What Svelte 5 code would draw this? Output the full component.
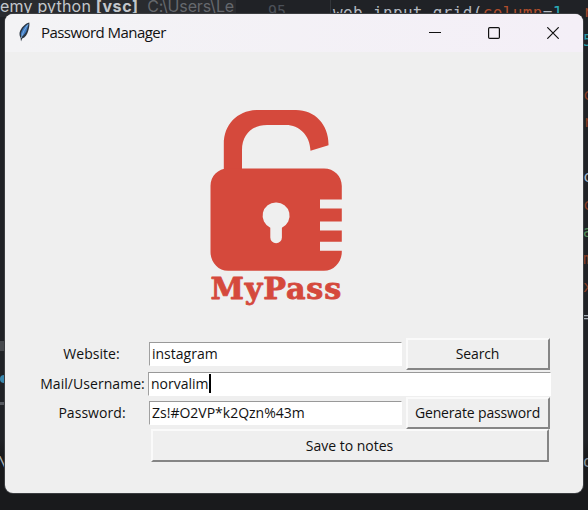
<script>
  let website = $state('instagram');
  let username = $state('norvalim');
  let password = $state('Zs!#O2VP*k2Qzn%43m');

  // Visible fragments of the editor on the right of the window
  const fragments = [
    { y: 3, text: 'r', color: '#a34a2c' },
    { y: 32, text: '5', color: '#2a9aa5' },
    { y: 86, text: 'c', color: '#8a3f25' },
    { y: 113, text: 'r', color: '#8a3f25' },
    { y: 168, text: 'c', color: '#a9b7c6' },
    { y: 196, text: 'c', color: '#8a3f25' },
    { y: 223, text: 'a', color: '#568a59' },
    { y: 250, text: 'm', color: '#8a3f25' },
    { y: 278, text: 'x', color: '#8a3f25' },
    { y: 308, text: '=', color: '#a9b0b8' },
    { y: 453, text: 'o', color: '#87919a' }
  ];
</script>

<div class="desktop">
  <div class="terminal">emy python <b>[vsc]</b> <span>C:\Users\Le</span></div>
  <div class="gutter"></div>
  <div class="lineno">95</div>
  <div class="code">web_input.grid(<i>column</i>=<em>1</em></div>
  {#each fragments as f}
    <span class="frag" style="top: {f.y}px; color: {f.color}">{f.text}</span>
  {/each}
  <div class="strip"></div>
  <div class="strip low"></div>
  <div class="dot"></div>
  <div class="slash">\</div>

  <main class="window">
    <header>
      <svg class="feather" width="14" height="20" viewBox="0 0 14 20">
        <path d="M11.300 .5C7 1.500 2.800 6 1.600 10.500c-.3 2 .2 4 1 5.500L3 19.500l1.200-3c3-1 5-4 6-7.500.8-2.800 1.500-5.500 1.100-8.500z" fill="#2b3642" />
        <path d="M10.400 2C6.500 4 3.500 8 2.800 12.500L3.800 14.500c2.500-1.500 4.300-4 5.200-7 .6-1.900 1.300-3.500 1.400-5.500z" fill="#3f7cc4" />
        <path d="M10 2.500C7 6.500 5 10 3.200 16" fill="none" stroke="#8fbbe6" stroke-width=".8" />
      </svg>
      <span class="title">Password Manager</span>
      <div class="controls">
        <svg width="12" height="12" viewBox="0 0 12 12"><path d="M0 5.500H12" /></svg>
        <svg width="12" height="12" viewBox="0 0 12 12"><rect x=".6" y=".6" width="10.800" height="10.800" rx="1.200" /></svg>
        <svg width="12" height="12" viewBox="0 0 12 12"><path d="M.3 .3 11.700 11.700M11.700 .3 .3 11.700" /></svg>
      </div>
    </header>

    <svg class="logo" width="140" height="204" viewBox="206 106 140 204">
      <g fill="#d5493c">
        <path d="M223.800 175V144C223.800 124 238 110 258 110H296C315 110 329 125 328.500 145.300L310.500 150.800C310 135 299 125 286 125H267C252 125 242 135 242 150V175Z" />
        <path d="M228 168.500H324C334 168.500 341.800 176 341.800 186V199.500H320V208.500H341.800V221.500H320V230.500H341.800V241.800H320V250.800H341.800V252C341.800 262 334 270.800 324 270.800H228C218 270.800 210.500 262 210.500 252V186C210.500 176 218 168.500 228 168.500Z" />
      </g>
      <path d="M276 202.500A13.200 13.200 0 0 0 270.300 227.700V237.500A5.800 5.800 0 0 0 281.900 237.500V227.700A13.200 13.200 0 0 0 276 202.500Z" fill="#efefef" />
      <text x="210.500" y="298.500" textLength="131.500" lengthAdjust="spacingAndGlyphs">MyPass</text>
    </svg>

    <form onsubmit={(e) => e.preventDefault()}>
      <div class="row first">
        <label for="website">Website:</label>
        <input id="website" bind:value={website} />
        <button>Search</button>
      </div>
      <div class="row second">
        <label for="user">Mail/Username:</label>
        <div class="entry"><span>{username}</span><span class="caret"></span></div>
      </div>
      <div class="row third">
        <label for="password">Password:</label>
        <input id="password" bind:value={password} />
        <button>Generate password</button>
      </div>
      <button class="save">Save to notes</button>
    </form>
  </main>
</div>

<style>
  :global(body) { margin: 0; }
  .desktop {
    position: relative;
    width: 588px;
    height: 510px;
    overflow: hidden;
    background: linear-gradient(#202226 0 440px, #191a1c 455px);
  }
  .terminal, .code, .lineno, .frag, .slash, .gutter, .strip, .dot { position: absolute; white-space: pre; }
  .terminal { left: 0; top: -5px; width: 236px; height: 22px; overflow: hidden; background: #292b2f; color: #c3c7cb; font: 16px/22px Inter, sans-serif; letter-spacing: .2px; }
  .terminal b { letter-spacing: .6px; }
  .terminal span { margin-left: 4px; color: #65686d; letter-spacing: -.15px; }
  .gutter { left: 330px; top: 0; width: 1px; height: 14px; background: #33363a; }
  .lineno { left: 268px; top: 1px; color: #4b5058; font: 15px/22px "DejaVu Sans Mono", monospace; }
  .code { left: 333px; top: 2px; color: #b5bac2; font: 16px/22px "DejaVu Sans Mono", monospace; letter-spacing: .35px; }
  .code i { color: #b04e2d; font-style: normal; }
  .code em { color: #2aacb8; font-style: normal; }
  .frag { left: 583px; font: 16px/18px "DejaVu Sans Mono", monospace; }
  .strip { left: 0; top: 341px; width: 5px; height: 10px; background: #47494d; }
  .strip.low { top: 402px; height: 3px; background: #56595f; }
  .dot { left: 0; top: 375px; width: 9px; height: 8px; border-radius: 4px; background: #3987ad; }
  .slash { left: -2px; top: 453px; color: #a9aeb5; font: 16px/20px "DejaVu Sans Mono", monospace; }

  .window {
    position: absolute;
    left: 5px;
    top: 14px;
    width: 578px;
    height: 479px;
    overflow: hidden;
    border-radius: 8px;
    background: #efefef;
    box-shadow: 0 0 0 1px #3b3d40;
    color: #111;
    font: 14px/20px "Open Sans", "Noto Sans", sans-serif;
  }
  header {
    box-sizing: border-box;
    display: flex;
    align-items: center;
    height: 38px;
    padding: 0 24px 0 13px;
    background: linear-gradient(90deg, #f3f3f5, #f4eff7);
  }
  .feather { margin-top: -3px; }
  .title { margin: -2px 0 0 9px; font-size: 15px; letter-spacing: -.55px; }
  .controls { display: flex; gap: 47px; margin-left: auto; }
  .controls svg { fill: none; stroke: #111; stroke-width: 1.200; }
  .logo { display: block; margin: 54px 0 0 201px; }
  .logo text { fill: #d5493c; stroke: #d5493c; stroke-width: .8; stroke-linejoin: round; font: bold 30px "DejaVu Serif", serif; letter-spacing: .8px; }

  form { display: flex; flex-direction: column; margin-top: 28px; }
  .row { display: flex; align-items: center; }
  .first { height: 32px; }
  .second { height: 27px; }
  .third { height: 32px; }
  label { width: 144px; padding-left: 30px; box-sizing: border-box; text-align: center; letter-spacing: .05px; flex: none; white-space: nowrap; }
  .first label { padding-left: 29px; }
  .second label { width: 143px; padding-left: 32px; }
  .row input, .entry {
    box-sizing: border-box;
    width: 253px;
    height: 24px;
    margin: 0;
    padding: 0 0 1px 2px;
    border: 1px solid #fff;
    border-top-color: #999;
    border-left-color: #a0a0a0;
    border-radius: 0;
    outline: 0;
    background: #fff;
    color: #111;
    font: inherit;
    letter-spacing: 0;
  }
  .entry { display: flex; align-items: center; width: 403px; padding-bottom: 0; }
  .caret { width: 2px; height: 19px; background: #000; }
  button {
    box-sizing: border-box;
    width: 144px;
    height: 32px;
    margin-left: 4px;
    padding: 0 1px 0 0;
    border: 2px solid;
    border-color: #fafafa #858585 #858585 #fafafa;
    border-radius: 0;
    background: #efefef;
    color: #111;
    font: inherit;
    letter-spacing: -.15px;
  }
  .save { width: 398px; height: 33px; margin-left: 146px; letter-spacing: 0; }
</style>
